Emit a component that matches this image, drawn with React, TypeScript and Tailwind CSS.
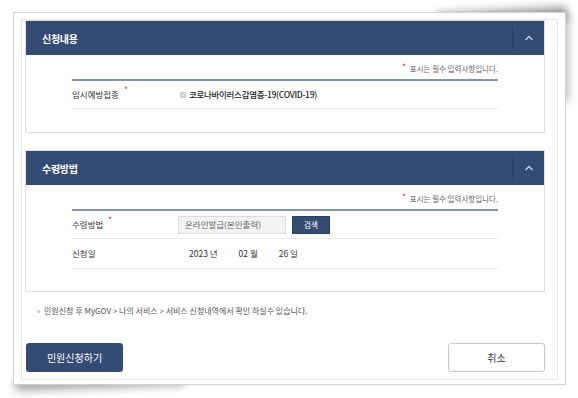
import React from "react";

const font = { fontFamily: '"Noto Sans CJK KR", "Noto Sans", sans-serif' };

function SectionHeader({ title }: { title: string }) {
  return (
    <div className="flex h-[34px] items-center justify-between bg-[#344b74]">
      <h2 className="pl-[16px] text-[10px] font-bold tracking-[-0.3px] text-white">{title}</h2>
      <div className="flex h-[22px] w-[32px] items-center justify-center border-l border-[#2a3e62]">
        <svg width="10" height="6" viewBox="0 0 10 6" fill="none">
          <path d="M1.5 5 L5 1.5 L8.5 5" stroke="#c9d2e3" strokeWidth="1.3" />
        </svg>
      </div>
    </div>
  );
}

function Notice() {
  return (
    <div className="flex h-[12px] items-center justify-end text-[7.5px] text-[#666]">
      <span className="mr-[4px] -mt-[5px] text-[8px] leading-none text-[#d0021b]">*</span>
      <span>표시는 필수 입력사항입니다.</span>
    </div>
  );
}

function Label({ text, required }: { text: string; required?: boolean }) {
  return (
    <div className="flex w-[106px] items-center text-[8.5px] text-[#333]">
      <span>{text}</span>
      {required && <span className="ml-[5px] -mt-[9px] text-[8px] leading-none text-[#d0021b]">*</span>}
    </div>
  );
}

export default function App() {
  return (
    <div className="h-[398px] w-[578px] bg-white pl-[13px] pt-[12px]" style={font}>
      <div className="relative h-[373px] w-[553px]">
        <div className="absolute right-[0px] top-[-2px] h-[14px] w-[130px] -rotate-[3deg] bg-black/40 blur-[4px]" />
        <div className="absolute right-[-3px] top-[0px] h-[90px] w-[10px] bg-black/25 blur-[4px]" />
        <div className="absolute bottom-[-3px] left-[2px] h-[12px] w-[170px] -rotate-[2deg] bg-black/35 blur-[4px]" />
        <div className="relative z-10 h-full border border-[#d2d2d2] bg-white px-[7px] pb-[4px] pt-[6px]">
          <div className="h-full border border-[#e6e6e6] pl-[3px] pr-[12px]">
            {/* 신청내용 */}
            <section className="border border-[#dedede]">
              <SectionHeader title="신청내용" />
              <div className="px-[46px] pb-[23px] pt-[8px]">
                <Notice />
                <div className="mt-[4px] border-t-2 border-[#8794a8]">
                  <div className="flex h-[28px] items-center border-b border-[#e8e8e8]">
                    <Label text="임시예방접종" required />
                    <div className="flex items-center pl-[2px]">
                      <span className="flex h-[6px] w-[6px] items-center justify-center bg-[#cfcfcf]">
                        <svg width="5" height="5" viewBox="0 0 5 5">
                          <path d="M0.8 2.6 L2 3.8 L4.2 1.2" stroke="#fff" strokeWidth="0.9" fill="none" />
                        </svg>
                      </span>
                      <span className="ml-[3px] text-[8.5px] font-medium tracking-[-0.3px] text-[#222]">
                        코로나바이러스감염증-19(COVID-19)
                      </span>
                    </div>
                  </div>
                </div>
              </div>
            </section>

            {/* 수령방법 */}
            <section className="mt-[17px] border border-[#dedede]">
              <SectionHeader title="수령방법" />
              <div className="px-[46px] pb-[22px] pt-[8px]">
                <Notice />
                <div className="mt-[4px] border-t-2 border-[#8794a8]">
                  <div className="flex h-[28px] items-center border-b border-[#e8e8e8]">
                    <Label text="수령방법" required />
                    <div className="flex items-center gap-[6px]">
                      <div className="flex h-[18px] w-[108px] items-center border border-[#dcdcdc] bg-[#f3f3f3] pl-[6px] text-[8.5px] text-[#666]">
                        온라인발급(본인출력)
                      </div>
                      <button className="h-[18px] w-[38px] border border-[#2b3f63] bg-[#344b74] text-[7.5px] text-white">
                        검색
                      </button>
                    </div>
                  </div>
                  <div className="flex h-[30px] items-center border-b border-[#e8e8e8]">
                    <Label text="신청일" />
                    <div className="flex items-center gap-[21px] pl-[11px] text-[8.5px] text-[#333]">
                      <span>2023 년</span>
                      <span>02 월</span>
                      <span>26 일</span>
                    </div>
                  </div>
                </div>
              </div>
            </section>

            <p className="mt-[13px] flex h-[12px] items-center pl-[12px] text-[8px] text-[#555]">
              <span className="mr-[4px] h-[3px] w-[3px] rounded-full border-[0.5px] border-[#aaa]" />
              민원신청 후 MyGOV &gt; 나의 서비스 &gt; 서비스 신청내역에서 확인 하실수 있습니다.
            </p>

            <div className="mt-[26px] flex justify-between pl-[1px]">
              <button className="h-[29px] w-[97px] rounded-[3px] bg-[#344b74] text-[10px] text-white">
                민원신청하기
              </button>
              <button className="h-[29px] w-[97px] rounded-[3px] border border-[#c9c9c9] bg-white text-[10px] text-[#333]">
                취소
              </button>
            </div>
          </div>
        </div>
      </div>
    </div>
  );
}
